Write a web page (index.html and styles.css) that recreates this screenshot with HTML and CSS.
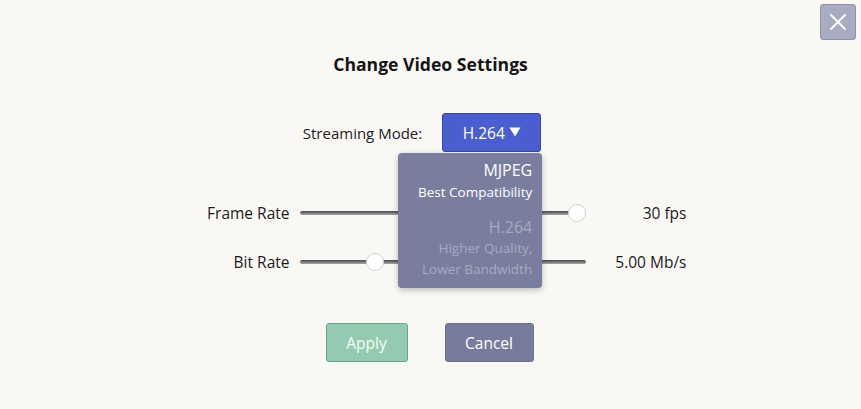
FILE: index.html
```html
<!DOCTYPE html>
<html>
<head>
<meta charset="utf-8">
<link rel="stylesheet" href="styles.css">
</head>
<body>
<div class="page">
  <div class="topbar">
    <button class="close-btn" aria-label="Close">
      <svg width="18" height="18" viewBox="0 0 18 18"><path d="M2 2 L16 16 M16 2 L2 16" stroke="#fff" stroke-width="2" stroke-linecap="round"/></svg>
    </button>
  </div>
  <h1 class="title">Change Video Settings</h1>
  <div class="mode-row">
    <span class="mode-label">Streaming Mode:</span>
    <div class="select-wrap">
      <button class="select-btn">H.264<svg class="caret" width="12" height="10" viewBox="0 0 12 10"><path d="M0.5 0.5 H11.5 L6 9.5 Z" fill="#fff"/></svg></button>
      <div class="menu">
        <div class="option">
          <div class="opt-name">MJPEG</div>
          <div class="opt-desc">Best Compatibility</div>
        </div>
        <div class="option disabled">
          <div class="opt-name">H.264</div>
          <div class="opt-desc">Higher Quality,</div>
          <div class="opt-desc">Lower Bandwidth</div>
        </div>
      </div>
    </div>
  </div>
  <div class="settings">
    <div class="label">Frame Rate</div>
    <div class="slider"><div class="track"></div><div class="thumb" style="left:277px"></div></div>
    <div class="value">30 fps</div>
    <div class="label">Bit Rate</div>
    <div class="slider"><div class="track"></div><div class="thumb" style="left:75px"></div></div>
    <div class="value">5.00 Mb/s</div>
  </div>
  <div class="actions">
    <button class="btn apply">Apply</button>
    <button class="btn cancel">Cancel</button>
  </div>
</div>
</body>
</html>
```
FILE: styles.css
```css
html, body {
  margin: 0;
  padding: 0;
  background: #faf8f4;
}
body {
  font-family: "Open Sans", "Noto Sans", sans-serif;
  color: #1c1c1c;
  width: 861px;
  height: 409px;
  overflow: hidden;
}
.page {
  display: flex;
  flex-direction: column;
  align-items: center;
}
.topbar {
  align-self: stretch;
  display: flex;
  justify-content: flex-end;
  padding: 4px 5px 0 0;
  height: 40px;
}
.close-btn {
  width: 36px;
  height: 36px;
  padding: 0;
  border: 1px solid #8e91a6;
  border-radius: 3px;
  background: #a9acc0;
  display: flex;
  align-items: center;
  justify-content: center;
}
.title {
  margin: 8px 0 0;
  font-size: 17.6px;
  line-height: 24px;
  font-weight: 700;
  color: #161616;
}
.mode-row {
  margin-top: 37px;
  display: flex;
  align-items: center;
  gap: 20px;
  padding-right: 17px;
  font-size: 15px;
}
.select-wrap {
  position: relative;
}
.select-btn {
  width: 99px;
  height: 39px;
  border: 1px solid #3746ad;
  border-radius: 3px;
  background: #4a5ecf;
  color: #fff;
  font-family: inherit;
  font-size: 15.5px;
  padding: 0;
  display: flex;
  align-items: center;
  justify-content: center;
  gap: 4px;
}
.caret {
  display: block;
  margin-top: -1px;
}
.menu {
  position: absolute;
  right: -1px;
  top: 40px;
  width: 144px;
  height: 135px;
  box-sizing: border-box;
  background: #797e9f;
  border-radius: 4px;
  box-shadow: 0 2px 6px rgba(0, 0, 0, 0.25);
  text-align: right;
  z-index: 2;
}
.option {
  padding: 6px 10px 6px 6px;
  color: #fff;
  white-space: nowrap;
}
.option.disabled {
  color: #a7aac2;
  padding-top: 7px;
}
.opt-name {
  font-size: 16px;
  line-height: 22px;
}
.opt-desc {
  font-size: 13.5px;
  line-height: 22px;
}
.option.disabled .opt-desc {
  line-height: 21px;
}
.settings {
  margin-top: 46px;
  display: grid;
  grid-template-columns: 115px 286px 91px;
  grid-auto-rows: 30px;
  column-gap: 10px;
  row-gap: 19px;
  align-items: center;
  font-size: 15.5px;
}
.label, .value {
  text-align: right;
}
.slider {
  position: relative;
  height: 18px;
  display: flex;
  align-items: center;
}
.track {
  flex: 1;
  height: 4px;
  border-radius: 2px;
  background: linear-gradient(#474747, #a8a8a8);
}
.thumb {
  position: absolute;
  top: 0;
  width: 18px;
  height: 18px;
  margin-left: -9px;
  box-sizing: border-box;
  border-radius: 50%;
  background: #fff;
  border: 1px solid #d2d2d2;
}
.actions {
  margin-top: 46px;
  display: flex;
  gap: 37px;
  padding-right: 2px;
}
.btn {
  height: 39px;
  border-radius: 3px;
  font-family: inherit;
  font-size: 15.5px;
  padding: 0;
}
.apply {
  width: 82px;
  background: #94cbb0;
  border: 1px solid #62a986;
  color: #f7fcf9;
}
.cancel {
  width: 89px;
  background: #777c9c;
  border: 1px solid #6b7090;
  color: #fff;
}
```
